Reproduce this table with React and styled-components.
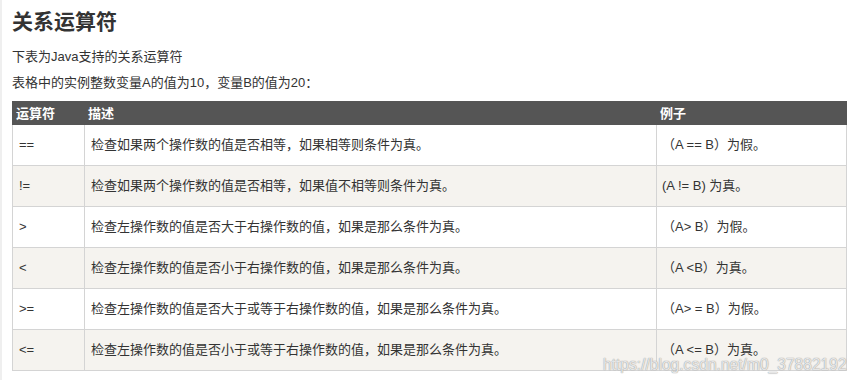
import React from "react"
import styled, { createGlobalStyle } from "styled-components"

const rows = [
  ["==", "检查如果两个操作数的值是否相等，如果相等则条件为真。", "（A == B）为假。"],
  ["!=", "检查如果两个操作数的值是否相等，如果值不相等则条件为真。", "(A != B) 为真。"],
  [">", "检查左操作数的值是否大于右操作数的值，如果是那么条件为真。", "（A> B）为假。"],
  ["<", "检查左操作数的值是否小于右操作数的值，如果是那么条件为真。", "（A <B）为真。"],
  [">=", "检查左操作数的值是否大于或等于右操作数的值，如果是那么条件为真。", "（A> = B）为假。"],
  ["<=", "检查左操作数的值是否小于或等于右操作数的值，如果是那么条件为真。", "（A <= B）为真。"],
]

export default function App() {
  return (
    <>
      <GlobalStyle />
      <Page>
        <Title>关系运算符</Title>
        <Text>下表为Java支持的关系运算符</Text>
        <Text $tight>表格中的实例整数变量A的值为10，变量B的值为20：</Text>
        <Table>
          <colgroup>
            <col style={{ width: 72 }} />
            <col style={{ width: 572 }} />
            <col style={{ width: 190 }} />
          </colgroup>
          <tbody>
            <tr>
              <Th>运算符</Th>
              <Th>描述</Th>
              <Th>例子</Th>
            </tr>
            {rows.map((r, i) => (
              <Row key={i} $shade={i % 2 === 1}>
                <Td>{r[0]}</Td>
                <Td>{r[1]}</Td>
                <Td $example>{r[2]}</Td>
              </Row>
            ))}
          </tbody>
        </Table>
        <Watermark>https://blog.csdn.net/m0_37882192</Watermark>
      </Page>
    </>
  )
}

const GlobalStyle = createGlobalStyle`
  body {
    margin: 0;
    background: #fff;
    font-family: "Liberation Sans", "Noto Sans CJK SC", sans-serif;
    color: #333;
  }
`

const Page = styled.div`
  position: relative;
  height: 380px;
  box-sizing: border-box;
  padding: 8px 0 0 10px;
  border-left: 2px solid #efefef;
`

const Title = styled.h2`
  margin: 0;
  font-size: 21px;
  line-height: 28px;
  font-weight: 700;
  color: #333;
`

const Text = styled.p`
  margin: ${(props) => (props.$tight ? "6px 0 8px" : "11px 0 0")};
  font-size: 13px;
  line-height: 20px;
`

const Table = styled.table`
  width: 834px;
  table-layout: fixed;
  border-collapse: collapse;
  font-size: 13px;
`

const Th = styled.th`
  height: 23px;
  padding: 0 3px;
  box-sizing: border-box;
  background: #555;
  color: #fff;
  border: 1px solid #555;
  text-align: left;
  font-weight: 700;
  line-height: 21px;
`

const Row = styled.tr`
  background: ${(props) => (props.$shade ? "#f5f3ef" : "#fff")};
`

const Td = styled.td`
  height: 41px;
  box-sizing: border-box;
  padding: 0 ${(props) => (props.$example ? "5px" : "6px")};
  border: 1px solid #d4d4d4;
  line-height: 20px;
  vertical-align: middle;
`

const Watermark = styled.div`
  position: absolute;
  left: 601px;
  top: 355px;
  font-size: 15.6px;
  line-height: 20px;
  white-space: nowrap;
  color: rgba(255, 255, 255, 0.75);
  text-shadow: 0 0 1px #999, 0 0 1px #aaa;
`
